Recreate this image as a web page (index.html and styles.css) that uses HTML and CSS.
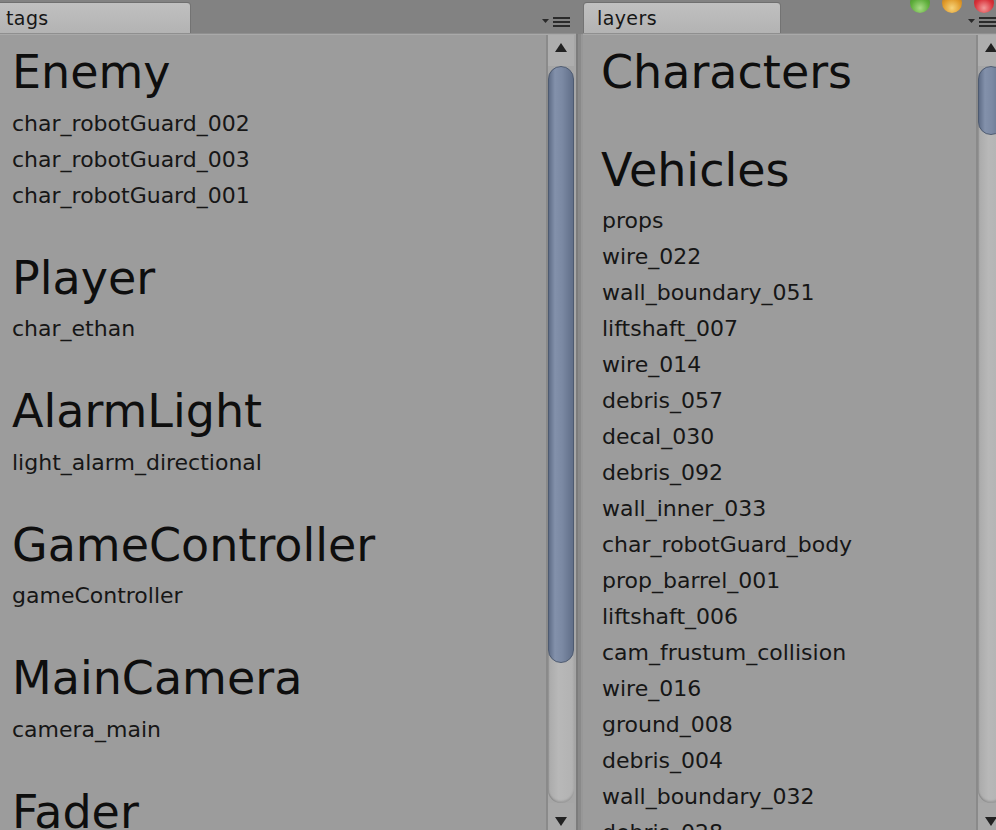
FILE: index.html
```html
<!DOCTYPE html>
<html>
<head>
<meta charset="utf-8">
<link rel="stylesheet" href="styles.css">
</head>
<body>
<div class="app">
  <section class="panel panel-tags">
    <header class="tabbar">
      <div class="tab tab-first">tags</div>
      <svg class="menu" width="28" height="12" viewBox="0 0 28 12"><polygon points="0,3 7,3 3.5,7" fill="#2a2a2a"/><rect x="11" y="1" width="17" height="2" fill="#2a2a2a"/><rect x="11" y="5" width="17" height="2" fill="#2a2a2a"/><rect x="11" y="9" width="17" height="2" fill="#2a2a2a"/></svg>
    </header>
    <div class="pane">
      <div class="list">
        <div class="group"><h2>Enemy</h2><ul><li>char_robotGuard_002</li><li>char_robotGuard_003</li><li>char_robotGuard_001</li></ul></div>
        <div class="group"><h2>Player</h2><ul><li>char_ethan</li></ul></div>
        <div class="group"><h2>AlarmLight</h2><ul><li>light_alarm_directional</li></ul></div>
        <div class="group"><h2>GameController</h2><ul><li>gameController</li></ul></div>
        <div class="group"><h2>MainCamera</h2><ul><li>camera_main</li></ul></div>
        <div class="group"><h2>Fader</h2><ul><li>screenFader</li></ul></div>
      </div>
      <div class="scroll">
        <div class="btn"><svg width="12" height="9" viewBox="0 0 12 9"><polygon points="6,0 12,9 0,9" fill="#222"/></svg></div>
        <div class="groove"><div class="thumb thumb-tags"></div></div>
        <div class="btn btn-down"><svg width="12" height="9" viewBox="0 0 12 9"><polygon points="0,0 12,0 6,9" fill="#222"/></svg></div>
      </div>
    </div>
  </section>
  <div class="divider"></div>
  <section class="panel panel-layers">
    <header class="tabbar">
      <div class="tab tab-second">layers</div>
      <svg class="menu" width="28" height="12" viewBox="0 0 28 12"><polygon points="0,3 7,3 3.5,7" fill="#2a2a2a"/><rect x="11" y="1" width="17" height="2" fill="#2a2a2a"/><rect x="11" y="5" width="17" height="2" fill="#2a2a2a"/><rect x="11" y="9" width="17" height="2" fill="#2a2a2a"/></svg>
    </header>
    <div class="pane">
      <div class="list">
        <div class="group"><h2>Characters</h2></div>
        <div class="group"><h2>Vehicles</h2><ul>
          <li>props</li><li>wire_022</li><li>wall_boundary_051</li><li>liftshaft_007</li><li>wire_014</li><li>debris_057</li><li>decal_030</li><li>debris_092</li><li>wall_inner_033</li><li>char_robotGuard_body</li><li>prop_barrel_001</li><li>liftshaft_006</li><li>cam_frustum_collision</li><li>wire_016</li><li>ground_008</li><li>debris_004</li><li>wall_boundary_032</li><li>debris_028</li><li>wire_031</li>
        </ul></div>
      </div>
      <div class="scroll">
        <div class="btn"><svg width="12" height="9" viewBox="0 0 12 9"><polygon points="6,0 12,9 0,9" fill="#222"/></svg></div>
        <div class="groove"><div class="thumb thumb-layers"></div></div>
        <div class="btn btn-down"><svg width="12" height="9" viewBox="0 0 12 9"><polygon points="0,0 12,0 6,9" fill="#222"/></svg></div>
      </div>
    </div>
  </section>
  <div class="lights">
    <span class="light green"></span>
    <span class="light orange"></span>
    <span class="light red"></span>
  </div>
</div>
</body>
</html>
```

FILE: styles.css
```css
* { box-sizing: border-box; }
html, body { margin: 0; padding: 0; }
body {
  width: 996px;
  height: 830px;
  overflow: hidden;
  background: #828282;
  font-family: "DejaVu Sans", "Liberation Sans", sans-serif;
  color: #141414;
}
.app {
  position: relative;
  display: flex;
  width: 1010px;
  height: 830px;
}
.panel {
  display: flex;
  flex-direction: column;
  height: 830px;
  flex: none;
}
.panel-tags { width: 576px; }
.panel-layers { width: 423px; }
.divider {
  width: 7px;
  flex: none;
  background:
    linear-gradient(#828282, #828282) top / 100% 34px no-repeat,
    linear-gradient(90deg, #7c7c7c 0, #7c7c7c 2px, #8a8a8a 2px, #8a8a8a 5px, #979797 5px);
}
.tabbar {
  height: 34px;
  flex: none;
  display: flex;
  align-items: flex-end;
  justify-content: space-between;
  border-bottom: 1px solid #8f8f8f;
}
.tab {
  height: 31px;
  width: 191px;
  background: linear-gradient(#c0c0c0, #b3b3b3);
  border-top: 1px solid #6f6f6f;
  border-right: 1px solid #737373;
  border-top-right-radius: 4px;
  font-size: 19px;
  letter-spacing: 0.4px;
  line-height: 30px;
  padding-left: 6px;
  color: #161616;
}
.tab-second {
  width: 198px;
  border-left: 1px solid #737373;
  border-top-left-radius: 4px;
  padding-left: 13px;
}
.menu {
  margin: 0 6px 5px 0;
}
.panel-layers .menu { margin-right: 10px; }
.pane {
  flex: 1;
  display: flex;
  min-height: 0;
  background: #9c9c9c;
  border-top: 1px solid #a9a9a9;
}
.list {
  flex: 1;
  overflow: hidden;
  padding-top: 5px;
}
.panel-tags .list { padding-left: 12px; }
.panel-layers .list { padding-left: 19px; }
.group { margin-bottom: 32px; }
h2 {
  margin: 0;
  font-size: 46px;
  font-weight: normal;
  line-height: 64px;
  height: 65.5px;
  padding-bottom: 1.5px;
  color: #0e0e0e;
  white-space: nowrap;
}
.panel-layers h2 { margin-left: -1px; }
ul {
  list-style: none;
  margin: 0;
  padding: 0;
}
li {
  font-size: 22px;
  line-height: 36px;
  height: 36px;
  white-space: nowrap;
  color: #161616;
}
.scroll {
  width: 30px;
  flex: none;
  display: flex;
  flex-direction: column;
  background: #a6a6a6;
  border-left: 2px solid #8a8a8a;
  padding-right: 2px;
}
.btn {
  height: 31px;
  flex: none;
  display: flex;
  justify-content: center;
  align-items: flex-start;
  padding-top: 8px;
  background: #aeaeae;
}
.btn-down {
  height: 27px;
  padding-top: 14px;
  background: #a8a8a8;
}
.groove {
  height: 737px;
  flex: none;
  border-radius: 13px;
  background: linear-gradient(90deg, #a9a9a9, #b8b8b8 40%, #b2b2b2);
  box-shadow: inset 0 -2px 2px rgba(0,0,0,0.15), inset 1px 0 1px rgba(0,0,0,0.1);
}
.thumb {
  border-radius: 13px;
  border: 1px solid #4d5a70;
  background: linear-gradient(90deg, #5f6d87 0, #8391ab 25%, #7b89a3 55%, #606e88 100%);
}
.thumb-tags { height: 597px; }
.thumb-layers { height: 69px; }
.lights {
  position: absolute;
  top: -7px;
  left: 910px;
  display: flex;
  gap: 12px;
}
.light {
  width: 20px;
  height: 20px;
  border-radius: 50%;
  display: block;
}
.green { background: radial-gradient(circle at 50% 75%, #a9dc86 0, #5fae3c 50%, #3d7f25 100%); }
.orange { background: radial-gradient(circle at 50% 75%, #f6d37a 0, #e09a2a 50%, #a86616 100%); }
.red { background: radial-gradient(circle at 50% 75%, #f29a9a 0, #d9323a 50%, #9c1a20 100%); }
```
